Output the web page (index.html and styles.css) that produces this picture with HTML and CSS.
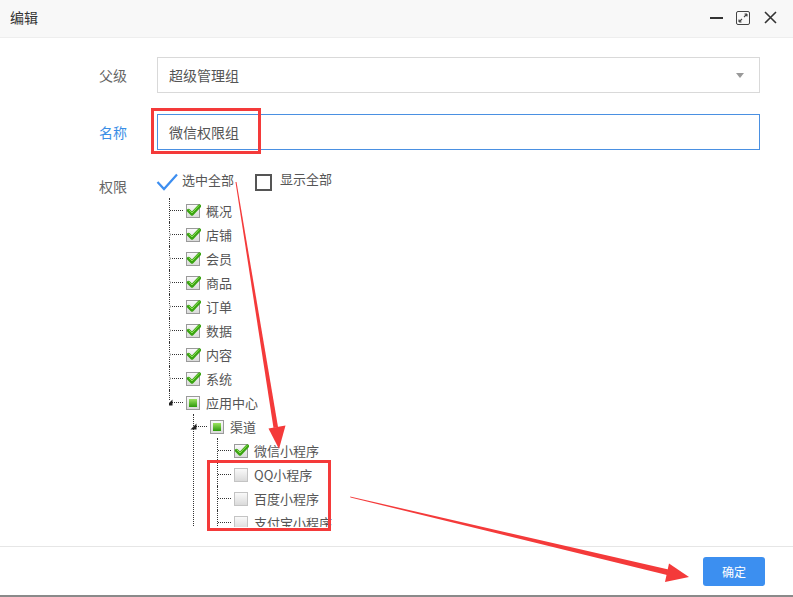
FILE: index.html
```html
<!DOCTYPE html>
<html lang="zh-CN">
<head>
    <meta charset="UTF-8">
    <title>编辑</title>
    <link rel="stylesheet" href="styles.css">
</head>
<body>
    <svg class="defs" width="0" height="0">
        <defs>
            <linearGradient id="g-box" x1="0" y1="0" x2="0" y2="1">
                <stop offset="0" stop-color="#fbfbfb"/>
                <stop offset="1" stop-color="#d9d9d9"/>
            </linearGradient>
            <linearGradient id="g-green" x1="0" y1="0" x2="0" y2="1">
                <stop offset="0" stop-color="#9be25f"/>
                <stop offset="1" stop-color="#2d9a0c"/>
            </linearGradient>
            <symbol id="cb-on" viewBox="0 0 15 15">
                <rect x="0.5" y="1.5" width="13" height="13" fill="url(#g-box)" stroke="#9a9a9a"/>
                <path d="M2.5 7.5 L6 11 L13.5 3" fill="none" stroke="#3aa412" stroke-width="3.4" stroke-linecap="round" stroke-linejoin="round"/>
                <path d="M3 7 L6 10 L13 2.6" fill="none" stroke="#8fe05a" stroke-width="1" stroke-linecap="round"/>
            </symbol>
            <symbol id="cb-half" viewBox="0 0 15 15">
                <rect x="0.5" y="1.5" width="13" height="13" fill="url(#g-box)" stroke="#9a9a9a"/>
                <rect x="3" y="4" width="8" height="8" fill="url(#g-green)"/>
            </symbol>
            <symbol id="cb-off" viewBox="0 0 15 15">
                <rect x="0.5" y="1.5" width="13" height="13" fill="url(#g-box)" stroke="#c4c4c4"/>
            </symbol>
            <symbol id="sw-closed" viewBox="0 0 7 9">
                <path d="M0.5 0.5 L6 4.5 L0.5 8.5 Z" fill="#fff" stroke="#9a9a9a"/>
            </symbol>
            <symbol id="sw-open" viewBox="0 0 7 7">
                <path d="M6.5 0.5 L6.5 6.5 L0.5 6.5 Z" fill="#222"/>
            </symbol>
        </defs>
    </svg>

    <div class="dialog">
        <div class="head">
            <span class="title">编辑</span>
            <div class="tools">
                <span class="t-min"></span>
                <svg class="t-max" width="14" height="14" viewBox="0 0 14 14">
                    <rect x="0.5" y="0.5" width="13" height="13" rx="1.5" fill="none" stroke="#444"/>
                    <path d="M3 11 L6 8 M3 11 L3 8.5 M3 11 L5.5 11 M11 3 L8 6 M11 3 L8.5 3 M11 3 L11 5.5" fill="none" stroke="#444" stroke-width="1.1"/>
                </svg>
                <svg class="t-close" width="13" height="13" viewBox="0 0 13 13">
                    <path d="M1 1 L12 12 M12 1 L1 12" stroke="#333" stroke-width="1.6"/>
                </svg>
            </div>
        </div>

        <div class="content">
            <div class="row">
                <label class="label">父级</label>
                <div class="field select">
                    <span>超级管理组</span>
                    <i class="caret"></i>
                </div>
            </div>
            <div class="row">
                <label class="label blue">名称</label>
                <div class="field input">微信权限组</div>
            </div>
            <div class="row perm">
                <label class="label">权限</label>
                <div class="perm-body">
                    <div class="check-all">
                        <svg class="tick" width="22" height="18" viewBox="0 0 22 18">
                            <path d="M1.5 9 L8 16 L21 1.5" fill="none" stroke="#3d8ef0" stroke-width="2.2"/>
                        </svg>
                        <span>选中全部</span>
                        <i class="box"></i>
                        <span>显示全部</span>
                    </div>
                    <div class="tree-wrap">
                        <ul class="tree">
                            <li><div class="node"><svg class="cb"><use href="#cb-on"/></svg><span>概况</span></div></li>
                            <li><div class="node"><svg class="sw"><use href="#sw-closed"/></svg><svg class="cb"><use href="#cb-on"/></svg><span>店铺</span></div></li>
                            <li><div class="node"><svg class="sw"><use href="#sw-closed"/></svg><svg class="cb"><use href="#cb-on"/></svg><span>会员</span></div></li>
                            <li><div class="node"><svg class="sw"><use href="#sw-closed"/></svg><svg class="cb"><use href="#cb-on"/></svg><span>商品</span></div></li>
                            <li><div class="node"><svg class="sw"><use href="#sw-closed"/></svg><svg class="cb"><use href="#cb-on"/></svg><span>订单</span></div></li>
                            <li><div class="node"><svg class="sw"><use href="#sw-closed"/></svg><svg class="cb"><use href="#cb-on"/></svg><span>数据</span></div></li>
                            <li><div class="node"><svg class="sw"><use href="#sw-closed"/></svg><svg class="cb"><use href="#cb-on"/></svg><span>内容</span></div></li>
                            <li><div class="node"><svg class="sw"><use href="#sw-closed"/></svg><svg class="cb"><use href="#cb-on"/></svg><span>系统</span></div></li>
                            <li class="last">
                                <div class="node"><svg class="sw open"><use href="#sw-open"/></svg><svg class="cb"><use href="#cb-half"/></svg><span>应用中心</span></div>
                                <ul>
                                    <li>
                                        <div class="node"><svg class="sw open"><use href="#sw-open"/></svg><svg class="cb"><use href="#cb-half"/></svg><span>渠道</span></div>
                                        <ul>
                                            <li><div class="node"><svg class="cb"><use href="#cb-on"/></svg><span>微信小程序</span></div></li>
                                            <li><div class="node"><svg class="cb"><use href="#cb-off"/></svg><span>QQ小程序</span></div></li>
                                            <li><div class="node"><svg class="cb"><use href="#cb-off"/></svg><span>百度小程序</span></div></li>
                                            <li><div class="node"><svg class="cb"><use href="#cb-off"/></svg><span>支付宝小程序</span></div></li>
                                        </ul>
                                    </li>
                                </ul>
                            </li>
                        </ul>
                    </div>
                </div>
            </div>
        </div>

        <div class="foot">
            <button class="btn">确定</button>
        </div>

        <!-- annotation marks drawn over the screenshot -->
        <svg class="marks" width="793" height="597" viewBox="0 0 793 597">
            <rect x="152.5" y="109.5" width="107" height="43" fill="none" stroke="#f43a3a" stroke-width="3"/>
            <rect x="208.5" y="461.5" width="121" height="68" fill="none" stroke="#f43a3a" stroke-width="3"/>
            <polygon points="235.5,182 236.5,182 278,427 273.5,428" fill="#f43a3a"/>
            <polygon points="268.5,428.5 285.5,425.5 279,449" fill="#f43a3a"/>
            <polygon points="350,496.5 350.5,497.5 667,575 668.5,569.5" fill="#f43a3a"/>
            <polygon points="669,563.5 665,582 689,577" fill="#f43a3a"/>
        </svg>
    </div>
</body>
</html>
```

FILE: styles.css
```css
* {
    margin: 0;
    padding: 0;
    box-sizing: border-box;
}

body {
    font-family: "Noto Sans CJK SC", "Liberation Sans", sans-serif;
    background: #fff;
    color: #555;
}

.defs {
    position: absolute;
}

.dialog {
    position: relative;
    width: 793px;
    height: 597px;
    display: flex;
    flex-direction: column;
    border-bottom: 2px solid #8a8a8a;
    overflow: hidden;
}

.head {
    height: 38px;
    flex: none;
    background: #f8f8f8;
    border-bottom: 1px solid #eee;
    display: flex;
    align-items: center;
    justify-content: space-between;
    padding: 0 16px 0 10px;
}

.title {
    font-size: 14px;
    color: #333;
    line-height: 20px;
    margin-top: -3px;
}

.tools {
    display: flex;
    align-items: center;
    gap: 13px;
    margin-top: -2px;
}

.t-min {
    display: block;
    width: 13px;
    height: 2px;
    background: #333;
}

.t-close {
    margin-left: 1px;
}

.content {
    flex: 1;
    padding: 19px 33px 0 0;
    overflow: hidden;
}

.row {
    display: flex;
    gap: 30px;
    margin-bottom: 21px;
}

.label {
    width: 127px;
    flex: none;
    text-align: right;
    font-size: 14px;
    line-height: 36px;
    color: #666;
}

.label.blue {
    color: #3a8ee6;
}

.field {
    flex: 1;
    height: 36px;
    border: 1px solid #d9d9d9;
    padding: 0 11px;
    font-size: 14px;
    line-height: 34px;
    color: #555;
}

.select {
    display: flex;
    justify-content: space-between;
    align-items: center;
    padding-right: 15px;
}

.caret {
    width: 0;
    height: 0;
    border-left: 4px solid transparent;
    border-right: 4px solid transparent;
    border-top: 5px solid #999;
}

.input {
    border-color: #4a90e2;
}

/* collapses with the 21px above, leaving 18px */
.perm {
    margin-top: -3px;
    margin-bottom: 0;
}

.perm-body {
    flex: 1;
}

.check-all {
    display: flex;
    align-items: center;
    height: 22px;
    font-size: 13px;
    color: #555;
}

.tick {
    margin: 5px 4px 0 -1px;
}

.box {
    width: 17px;
    height: 17px;
    border: 2px solid #555;
    margin: 6px 8px 0 21px;
}

.check-all span:last-child {
    margin-top: -1px;
}

.tree-wrap {
    margin: 8px 0 0 12px;
    height: 329px;
    overflow: hidden;
}

.tree,
.tree ul {
    list-style: none;
}

.tree ul {
    margin-left: 7px;
}

.tree li {
    position: relative;
    padding-left: 17px;
}

.tree li::before {
    content: '';
    position: absolute;
    left: 0;
    top: 0;
    bottom: 0;
    border-left: 1px dotted #333;
}

.tree li.last::before {
    bottom: auto;
    height: 10px;
}

.tree li::after {
    content: '';
    position: absolute;
    left: 1px;
    top: 12px;
    width: 13px;
    border-top: 1px dotted #333;
}

.node {
    position: relative;
    display: flex;
    align-items: center;
    height: 24px;
    gap: 5px;
    font-size: 13px;
    color: #555;
}

.cb {
    width: 15px;
    height: 15px;
    overflow: visible;
}

.sw {
    position: absolute;
    left: -21px;
    top: 8px;
    width: 7px;
    height: 9px;
    z-index: 1;
}

.sw.open {
    left: -20px;
    top: 9px;
    width: 7px;
    height: 7px;
}

.foot {
    height: 49px;
    flex: none;
    border-top: 1px solid #e6e6e6;
    display: flex;
    align-items: center;
    justify-content: flex-end;
    padding-right: 28px;
}

.btn {
    width: 62px;
    height: 29px;
    border: none;
    border-radius: 3px;
    background: #3c8ff0;
    color: #fff;
    font-family: inherit;
    font-size: 12px;
}

.marks {
    position: absolute;
    left: 0;
    top: 0;
    pointer-events: none;
}
```
